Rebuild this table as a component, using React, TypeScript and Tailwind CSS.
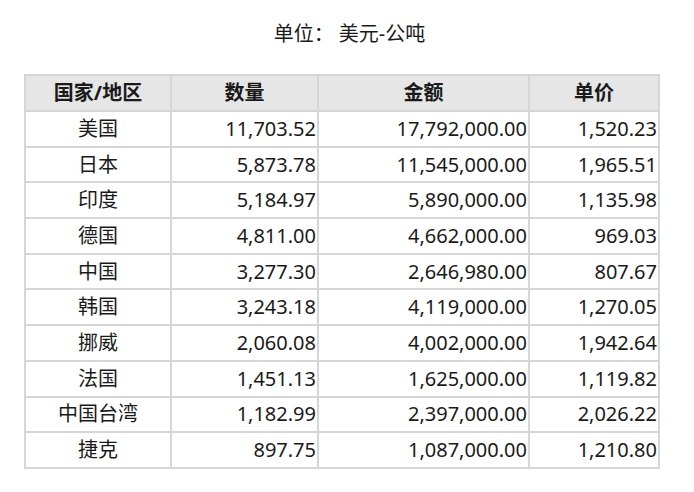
import React from 'react';

// Rows of the table: country/region, quantity, amount, unit price
const rows: [string, string, string, string][] = [
  ['美国', '11,703.52', '17,792,000.00', '1,520.23'],
  ['日本', '5,873.78', '11,545,000.00', '1,965.51'],
  ['印度', '5,184.97', '5,890,000.00', '1,135.98'],
  ['德国', '4,811.00', '4,662,000.00', '969.03'],
  ['中国', '3,277.30', '2,646,980.00', '807.67'],
  ['韩国', '3,243.18', '4,119,000.00', '1,270.05'],
  ['挪威', '2,060.08', '4,002,000.00', '1,942.64'],
  ['法国', '1,451.13', '1,625,000.00', '1,119.82'],
  ['中国台湾', '1,182.99', '2,397,000.00', '2,026.22'],
  ['捷克', '897.75', '1,087,000.00', '1,210.80'],
];

const App = () => {
  return (
    <div className="w-[694px] h-[492px] bg-white text-[#1a1a1a] font-['Noto_Sans','Noto_Sans_CJK_SC',sans-serif]">
      {/* Title */}
      <div className="pt-[20px] pl-[5px] text-center text-[20px] leading-[28px]">
        单位：&nbsp;美元-公吨
      </div>

      {/* Table */}
      <div className="pt-[26px] pl-[24px]">
        <table className="border-collapse w-[634px] table-fixed text-[20px] leading-none">
          <colgroup>
            <col className="w-[146px]" />
            <col className="w-[147px]" />
            <col className="w-[211px]" />
            <col className="w-[130px]" />
          </colgroup>
          <thead>
            <tr className="h-[36px] bg-[#e6e6e6]">
              <th className="border-2 border-[#d6d6d6] font-bold text-center">国家/地区</th>
              <th className="border-2 border-[#d6d6d6] font-bold text-center">数量</th>
              <th className="border-2 border-[#d6d6d6] font-bold text-center">金额</th>
              <th className="border-2 border-[#d6d6d6] font-bold text-center">单价</th>
            </tr>
          </thead>
          <tbody>
            {rows.map((r, i) => (
              <tr key={i} className="h-[35.7px]">
                <td className="border-2 border-[#d6d6d6] text-center">{r[0]}</td>
                <td className="border-2 border-[#d6d6d6] text-right pr-[1px]">{r[1]}</td>
                <td className="border-2 border-[#d6d6d6] text-right pr-[1px]">{r[2]}</td>
                <td className="border-2 border-[#d6d6d6] text-right pr-[1px]">{r[3]}</td>
              </tr>
            ))}
          </tbody>
        </table>
      </div>
    </div>
  );
};

export default App;
